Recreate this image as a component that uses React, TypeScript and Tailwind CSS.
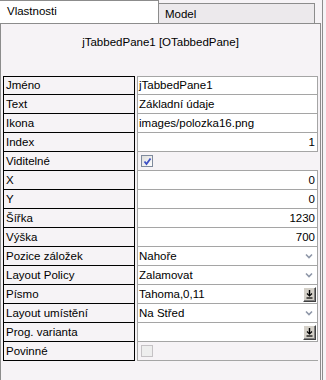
import React from "react";

type Row = {
  label: string;
  kind: "text" | "num" | "check" | "select" | "button";
  value?: string;
  checked?: boolean;
  disabled?: boolean;
};

const rows: Row[] = [
  { label: "Jméno", kind: "text", value: "jTabbedPane1" },
  { label: "Text", kind: "text", value: "Základní údaje" },
  { label: "Ikona", kind: "text", value: "images/polozka16.png" },
  { label: "Index", kind: "num", value: "1" },
  { label: "Viditelné", kind: "check", checked: true },
  { label: "X", kind: "num", value: "0" },
  { label: "Y", kind: "num", value: "0" },
  { label: "Šířka", kind: "num", value: "1230" },
  { label: "Výška", kind: "num", value: "700" },
  { label: "Pozice záložek", kind: "select", value: "Nahoře" },
  { label: "Layout Policy", kind: "select", value: "Zalamovat" },
  { label: "Písmo", kind: "button", value: "Tahoma,0,11" },
  { label: "Layout umístění", kind: "select", value: "Na Střed" },
  { label: "Prog. varianta", kind: "button", value: "" },
  { label: "Povinné", kind: "check", checked: false, disabled: true },
];

function Chevron() {
  return (
    <svg width="8" height="6" viewBox="0 0 8 6" className="mr-[4px] shrink-0">
      <path d="M1 1.5 L4 4.5 L7 1.5" fill="none" stroke="#8f97a8" strokeWidth="1.6" />
    </svg>
  );
}

function DotsButton() {
  return (
    <div className="mr-[1px] flex h-[15px] w-[13px] shrink-0 items-center justify-center border border-t-white border-l-white border-r-[#404040] border-b-[#404040] bg-[#d4d0c8] shadow-[inset_-1px_-1px_0_#808080]">
      <svg width="7" height="9" viewBox="0 0 7 9">
        <path d="M3.5 0 V5" stroke="#000" strokeWidth="1.4" />
        <path d="M1 3.5 L3.5 6 L6 3.5" fill="none" stroke="#000" strokeWidth="1.2" />
        <path d="M0.5 8 H6.5" stroke="#000" strokeWidth="1.2" />
      </svg>
    </div>
  );
}

function Check({ checked, disabled }: { checked?: boolean; disabled?: boolean }) {
  return (
    <div
      className={
        disabled
          ? "ml-[3px] h-[12px] w-[12px] border border-[#c5c2c5] bg-[#eeeeee]"
          : "ml-[3px] flex h-[12px] w-[12px] items-center justify-center border border-[#7f8a9c] bg-gradient-to-br from-[#dcdcdc] to-white"
      }
    >
      {checked && (
        <svg width="9" height="9" viewBox="0 0 9 9">
          <path d="M1.5 4.5 L3.5 7 L7.5 1.5" fill="none" stroke="#3d4fc4" strokeWidth="1.8" />
        </svg>
      )}
    </div>
  );
}

function PropRow({ row, first }: { row: Row; first: boolean }) {
  const top = first ? " border-t" : "";
  const isCheck = row.kind === "check";
  return (
    <div className="flex h-[19px] shrink-0">
      <div className={"ml-[2px] flex w-[132px] items-center border-x border-b border-black pl-[2px]" + top}>
        {row.label}
      </div>
      {isCheck ? (
        <div className={"ml-[2px] flex w-[181px] items-center border-l border-b border-[#a5a5a5]" + top}>
          <Check checked={row.checked} disabled={row.disabled} />
        </div>
      ) : (
        <div
          className={
            "ml-[2px] flex w-[181px] items-center border-x border-b border-[#a5a5a5] bg-white pl-[1px]" + top
          }
        >
          {row.kind === "num" ? (
            <span className="ml-auto pr-[2px]">{row.value}</span>
          ) : (
            <>
              <span className="flex-1">{row.value}</span>
              {row.kind === "select" && <Chevron />}
              {row.kind === "button" && <DotsButton />}
            </>
          )}
        </div>
      )}
    </div>
  );
}

export default function App() {
  return (
    <div className="flex h-[380px] w-[326px] overflow-hidden bg-[#f6f3f6] font-['Liberation_Sans',Arial,sans-serif] text-[11.5px] leading-[13px] text-black">
      {/* Main area */}
      <div className="flex w-[321px] flex-col">
        {/* Tabs */}
        <div className="flex h-[23px] shrink-0 items-end">
          <div className="h-[23px] w-[159px] border-t border-r border-[#8c8c8c] bg-white pl-[7px] pt-[4px]">
            Vlastnosti
          </div>
          <div className="h-[20px] w-[156px] border-t border-r border-[#8c8c8c] bg-[#ece9ec] pl-[6px] pt-[4px]">
            Model
          </div>
        </div>

        {/* Panel */}
        <div className="flex flex-1 flex-col border-t border-x border-[#8c8c8c] bg-[#f6f3f6]">
          <div className="pt-[12px] text-center">jTabbedPane1 [OTabbedPane]</div>
          <div className="mt-[27px] flex flex-col">
            {rows.map((r, i) => (
              <PropRow key={r.label} row={r} first={i === 0} />
            ))}
          </div>
        </div>
      </div>

      {/* Outer frame edge */}
      <div className="ml-[1px] h-full w-[1px] bg-[#8c8c8c]" />
    </div>
  );
}
